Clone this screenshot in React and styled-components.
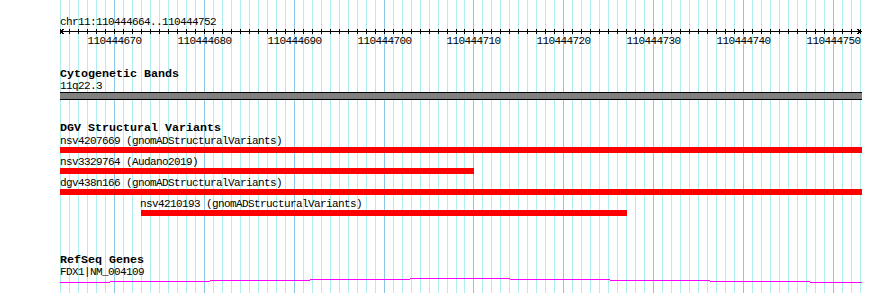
import React from 'react'
import styled, { createGlobalStyle } from 'styled-components'

const START = 110444664
const END = 110444752
const SPAN = END - START + 1
const WIDTH = 800
const SCALE = WIDTH / SPAN
const toX = (p) => (p - START) * SCALE

const GlobalStyle = createGlobalStyle`
  html, body {
    margin: 0;
    padding: 0;
    background: #fff;
  }
`

const Page = styled.div`
  position: relative;
  width: 890px;
  height: 293px;
  overflow: hidden;
  background: #fff;
  color: #000;
  font-family: "Liberation Mono", "DejaVu Sans Mono", monospace;
`

// grid sits under the tracks
const Grid = styled.svg`
  position: absolute;
  top: 0;
  left: 0;
`

const Tracks = styled.div`
  position: relative;
  display: flex;
  flex-direction: column;
  padding-left: 60px;
  width: 802px;
`

const Text = styled.div`
  box-sizing: border-box;
  font-size: 11px;
  letter-spacing: -0.6px;
  height: ${(p) => p.$h || 13}px;
  line-height: ${(p) => (p.$h || 13) - (p.$pad || 0)}px;
  padding-top: ${(p) => p.$pad || 0}px;
  padding-left: ${(p) => p.$indent || 0}px;
  white-space: pre;
`

const Title = styled.div`
  box-sizing: border-box;
  font-size: 11.67px;
  font-weight: bold;
  height: ${(p) => p.$h}px;
  line-height: ${(p) => p.$h - (p.$pad || 0)}px;
  padding-top: ${(p) => p.$pad || 0}px;
  white-space: pre;
`

const Ruler = styled.div`
  display: flex;
  flex-direction: column;
  padding-top: 16px;
`

const Axis = styled.svg`
  display: block;
`

const TickLabels = styled.div`
  position: relative;
  height: 13px;
`

const TickLabel = styled.span`
  position: absolute;
  top: 0;
  font-size: 11px;
  letter-spacing: -0.6px;
  line-height: 13px;
  transform: translateX(-50%);
`

const Track = styled.section`
  display: flex;
  flex-direction: column;
  margin-top: ${(p) => p.$top}px;
`

const Band = styled.div`
  height: 6px;
  width: 802px;
  background: #808080;
  border-top: 1px solid #000;
  border-bottom: 1px solid #000;
`

const Feature = styled.div`
  display: flex;
  flex-direction: column;
  margin-bottom: 3px;
`

const Bar = styled.div`
  height: 6px;
  background: #ff0000;
  margin-left: ${(p) => p.$from}px;
  width: ${(p) => p.$width}px;
`

const GeneLine = styled.svg`
  display: block;
`

const variants = [
  { name: 'nsv4207669 (gnomADStructuralVariants)', from: 0, width: 802 },
  { name: 'nsv3329764 (Audano2019)', from: 0, width: 414 },
  { name: 'dgv438n166 (gnomADStructuralVariants)', from: 0, width: 802 },
  { name: 'nsv4210193 (gnomADStructuralVariants)', from: 81, width: 486, indent: 80 },
]

const geneSteps = [
  [0, 50, 4], [50, 150, 3], [150, 250, 2], [250, 350, 1], [350, 450, 0],
  [450, 550, 1], [550, 650, 2], [650, 750, 3], [750, 802, 4],
]

function GridLines() {
  const lines = []
  for (let k = 0; k <= SPAN; k++) {
    const x = Math.round(60 + k * SCALE) + 0.5
    const major = (START + k) % 10 === 0
    lines.push(
      <line key={k} x1={x} x2={x} y1={0} y2={293}
        stroke={major ? '#8cc6e6' : '#aeeeee'} strokeWidth="1" />
    )
  }
  return (
    <Grid width="890" height="293" shapeRendering="crispEdges">
      {lines}
    </Grid>
  )
}

function RulerTrack() {
  const ticks = []
  const labels = []
  for (let p = START; p <= END + 1; p++) {
    const x = Math.round(toX(p)) + 0.5
    ticks.push(<line key={p} x1={x} x2={x} y1={0} y2={5} stroke="#000" />)
    if (p % 10 === 0) labels.push(p)
  }
  return (
    <Ruler>
      <Text>{`chr11:${START}..${END}`}</Text>
      <Axis width="802" height="6" shapeRendering="crispEdges">
        <line x1="0" x2="801" y1="2.5" y2="2.5" stroke="#000" />
        {ticks}
        <polyline points="4,0 0,2.5 4,5" fill="none" stroke="#000" />
        <polyline points="797,0 801,2.5 797,5" fill="none" stroke="#000" />
      </Axis>
      <TickLabels>
        {labels.map((p) => (
          <TickLabel key={p} style={{ left: Math.round(toX(p)) + 0.5 }}>{p}</TickLabel>
        ))}
      </TickLabels>
    </Ruler>
  )
}

export default function App() {
  return (
    <Page>
      <GlobalStyle />
      <GridLines />
      <Tracks>
        <RulerTrack />

        <Track $top={21}>
          <Title $h={11}>Cytogenetic Bands</Title>
          <Text $h={12} $pad={1}>11q22.3</Text>
          <Band />
        </Track>

        <Track $top={22}>
          <Title $h={13}>DGV Structural Variants</Title>
          {variants.map((v) => (
            <Feature key={v.name}>
              <Text $h={12} $pad={1} $indent={v.indent}>{v.name}</Text>
              <Bar $from={v.from} $width={v.width} />
            </Feature>
          ))}
        </Track>

        <Track $top={35}>
          <Title $h={12}>RefSeq Genes</Title>
          <Text $h={12} $pad={1}>FDX1|NM_004109</Text>
          <GeneLine width="802" height="6" shapeRendering="crispEdges">
            <path
              d={geneSteps.map(([a, b, y]) => `M${a} ${y + 0.5}H${b}`).join('')}
              stroke="#ff00ff" strokeWidth="1" fill="none"
            />
          </GeneLine>
        </Track>
      </Tracks>
    </Page>
  )
}
